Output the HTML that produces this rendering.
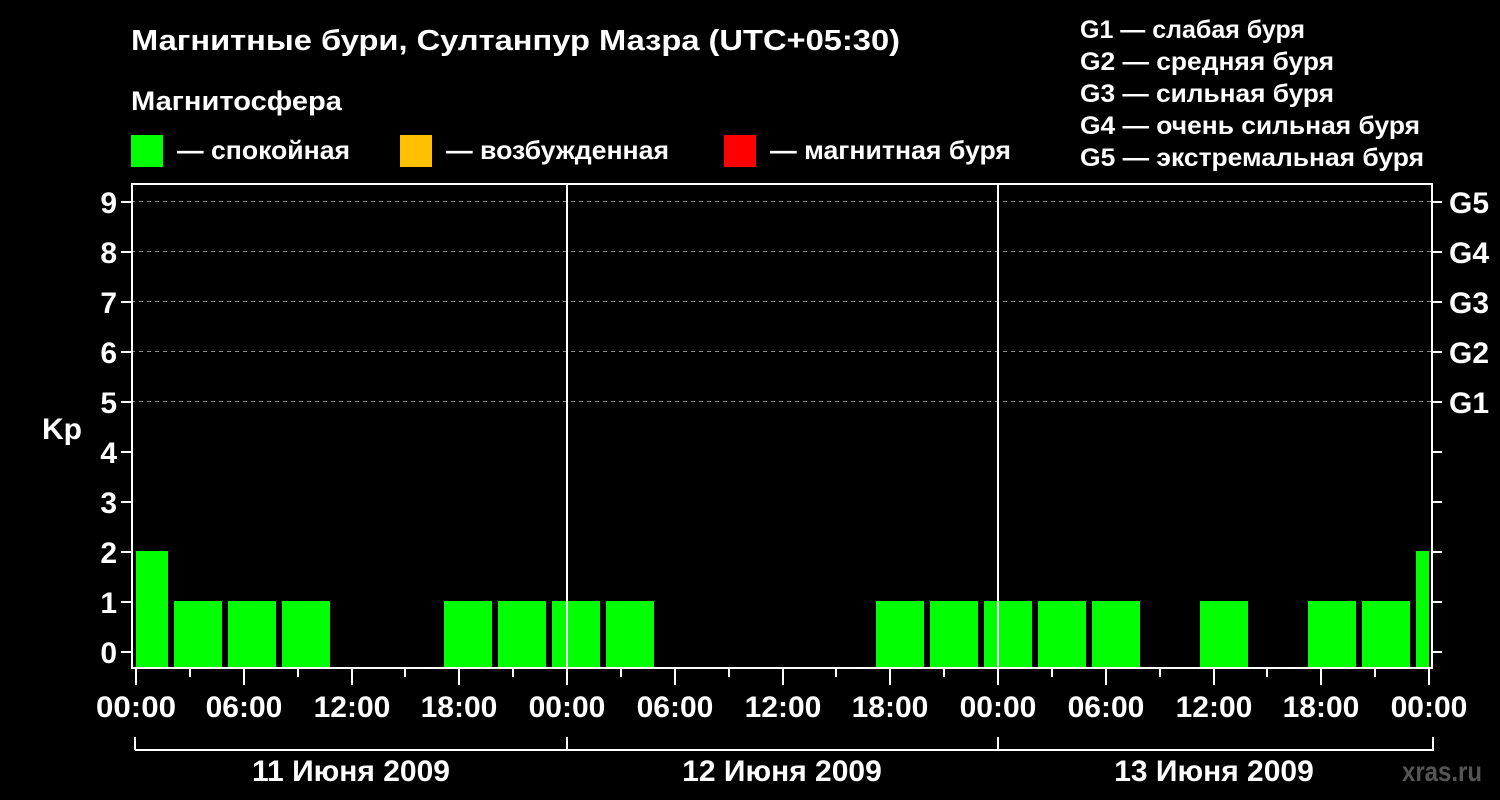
<!DOCTYPE html>
<html><head><meta charset="utf-8"><style>
html,body{margin:0;padding:0;background:#000;width:1500px;height:800px;overflow:hidden}
svg{display:block}
text{font-family:"Liberation Sans",sans-serif;font-weight:bold;fill:#fff}
</style></head><body>
<svg width="1500" height="800" viewBox="0 0 1500 800">
<text x="131" y="50" font-size="29" textLength="769" lengthAdjust="spacingAndGlyphs">Магнитные бури, Султанпур Мазра (UTC+05:30)</text>
<text x="131" y="110" font-size="27" textLength="211" lengthAdjust="spacingAndGlyphs">Магнитосфера</text>
<rect x="131" y="135" width="32" height="32" fill="#00ff00"/>
<text x="177" y="159" font-size="26" textLength="173" lengthAdjust="spacingAndGlyphs">— спокойная</text>
<rect x="400" y="135" width="32" height="32" fill="#ffc000"/>
<text x="446" y="159" font-size="26" textLength="223" lengthAdjust="spacingAndGlyphs">— возбужденная</text>
<rect x="724" y="135" width="32" height="32" fill="#ff0000"/>
<text x="770" y="159" font-size="26" textLength="241" lengthAdjust="spacingAndGlyphs">— магнитная буря</text>
<g font-size="25">
<text x="1080" y="38">G1 — слабая буря</text>
<text x="1080" y="70" textLength="254" lengthAdjust="spacingAndGlyphs">G2 — средняя буря</text>
<text x="1080" y="102" textLength="254" lengthAdjust="spacingAndGlyphs">G3 — сильная буря</text>
<text x="1080" y="134" textLength="340" lengthAdjust="spacingAndGlyphs">G4 — очень сильная буря</text>
<text x="1080" y="166" textLength="344" lengthAdjust="spacingAndGlyphs">G5 — экстремальная буря</text>
</g>
<g stroke="#888" stroke-width="1" stroke-dasharray="4,4">
<line x1="131" y1="201.5" x2="1433" y2="201.5"/>
<line x1="131" y1="251.5" x2="1433" y2="251.5"/>
<line x1="131" y1="301.5" x2="1433" y2="301.5"/>
<line x1="131" y1="351.5" x2="1433" y2="351.5"/>
<line x1="131" y1="401.5" x2="1433" y2="401.5"/>
</g>
<g fill="#00ff00">
<rect x="136" y="551" width="32" height="117"/>
<rect x="174" y="601" width="48" height="67"/>
<rect x="228" y="601" width="48" height="67"/>
<rect x="282" y="601" width="48" height="67"/>
<rect x="444" y="601" width="48" height="67"/>
<rect x="498" y="601" width="48" height="67"/>
<rect x="552" y="601" width="48" height="67"/>
<rect x="606" y="601" width="48" height="67"/>
<rect x="876" y="601" width="48" height="67"/>
<rect x="930" y="601" width="48" height="67"/>
<rect x="984" y="601" width="48" height="67"/>
<rect x="1038" y="601" width="48" height="67"/>
<rect x="1092" y="601" width="48" height="67"/>
<rect x="1200" y="601" width="48" height="67"/>
<rect x="1308" y="601" width="48" height="67"/>
<rect x="1362" y="601" width="48" height="67"/>
<rect x="1416" y="551" width="13" height="117"/>
</g>
<g stroke="#fff" stroke-width="2" fill="none">
<rect x="132" y="184" width="1300" height="484"/>
<line x1="567" y1="184" x2="567" y2="668"/>
<line x1="998" y1="184" x2="998" y2="668"/>
<path d="M121 652H132M121 602H132M121 552H132M121 502H132M121 452H132M121 402H132M121 352H132M121 302H132M121 252H132M121 202H132"/>
<path d="M1432 652H1442M1432 602H1442M1432 552H1442M1432 502H1442M1432 452H1442M1432 402H1442M1432 352H1442M1432 302H1442M1432 252H1442M1432 202H1442"/>
<path d="M135 750V737M135 750H1433V737M567 750V737M998 750V737"/>
</g>
<g stroke="#fff" stroke-width="2">
<path d="M136 668V685M190 668V677M244 668V685M298 668V677M352 668V685M405 668V677M459 668V685M513 668V677M567 668V685M621 668V677M675 668V685M729 668V677M783 668V685M836 668V677M890 668V685M944 668V677M998 668V685M1052 668V677M1106 668V685M1160 668V677M1214 668V685M1267 668V677M1321 668V685M1375 668V677M1429 668V685"/>
</g>
<g font-size="30" text-anchor="end">
<text x="117" y="663">0</text><text x="117" y="613">1</text><text x="117" y="563">2</text>
<text x="117" y="513">3</text><text x="117" y="463">4</text><text x="117" y="413">5</text>
<text x="117" y="363">6</text><text x="117" y="313">7</text><text x="117" y="263">8</text><text x="117" y="213">9</text>
</g>
<g font-size="30">
<text x="1449" y="213">G5</text><text x="1449" y="263">G4</text><text x="1449" y="313">G3</text>
<text x="1449" y="363">G2</text><text x="1449" y="413">G1</text>
</g>
<text x="42" y="439" font-size="30">Kp</text>
<g font-size="30" text-anchor="middle">
<text x="136" y="717" textLength="80" lengthAdjust="spacingAndGlyphs">00:00</text><text x="244" y="717">06:00</text><text x="352" y="717">12:00</text><text x="459" y="717">18:00</text>
<text x="567" y="717">00:00</text><text x="675" y="717">06:00</text><text x="783" y="717">12:00</text><text x="890" y="717">18:00</text>
<text x="998" y="717">00:00</text><text x="1106" y="717">06:00</text><text x="1214" y="717">12:00</text><text x="1321" y="717">18:00</text>
<text x="1429" y="717">00:00</text>
<text x="351" y="781">11 Июня 2009</text>
<text x="782" y="781">12 Июня 2009</text>
<text x="1214" y="781">13 Июня 2009</text>
</g>
<text x="1402" y="781" font-size="28" style="fill:#555" textLength="80" lengthAdjust="spacingAndGlyphs">xras.ru</text>
</svg>
</body></html>
